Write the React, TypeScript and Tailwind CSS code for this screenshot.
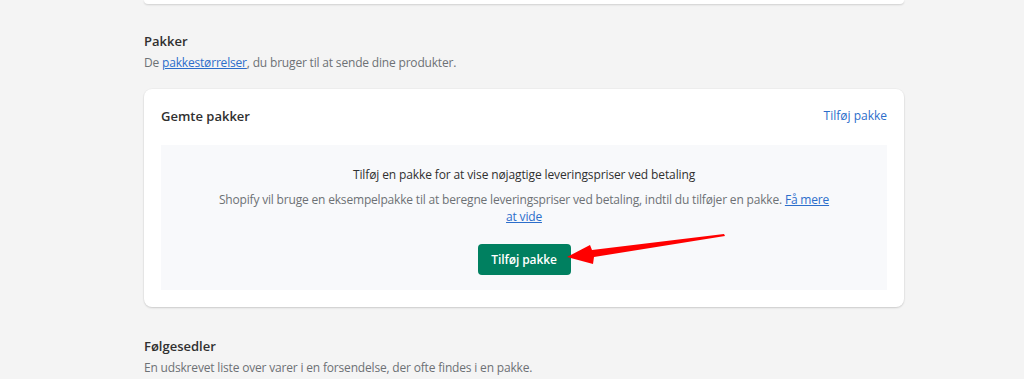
import React from "react";

export default function App() {
  return (
    <div className="relative w-[1024px] h-[379px] overflow-hidden bg-[#f4f4f4] font-['Open_Sans',sans-serif] text-[#202223]">
      <div className="ml-[144px] w-[760px]">
        <div className="h-[4px] rounded-b-lg bg-white shadow-[0_1px_2px_rgba(0,0,0,0.15)]" />
        <div className="pt-[27px]">
          <h2 className="text-[13px] leading-[20px] font-semibold text-[#303030]">Pakker</h2>
          <p className="mt-[3px] text-[12px] leading-[18px] tracking-[-0.18px] text-[#6d7175]">
            De <a className="text-[#2c6ecb] underline">pakkestørrelser</a>, du bruger til at sende dine produkter.
          </p>
        </div>
        <div className="mt-[17px] rounded-lg bg-white px-[17px] pt-[17px] pb-[17px] shadow-[0_1px_2px_rgba(0,0,0,0.15),0_0_0_1px_rgba(0,0,0,0.02)]">
          <div className="flex items-center justify-between h-[20px]">
            <h3 className="text-[13px] leading-[20px] font-semibold text-[#303030]">Gemte pakker</h3>
            <a className="text-[12px] leading-[20px] text-[#2c6ecb]">Tilføj pakke</a>
          </div>
          <div className="mt-[19px] h-[145px] bg-[#f8f9fb] pt-[20px] flex flex-col items-center">
            <p className="text-[12px] leading-[20px] tracking-[-0.12px] text-[#303030]">
              Tilføj en pakke for at vise nøjagtige leveringspriser ved betaling
            </p>
            <p className="mt-[6px] w-[622px] text-center text-[12px] leading-[17px] tracking-[-0.18px] text-[#6d7175]">
              Shopify vil bruge en eksempelpakke til at beregne leveringspriser ved betaling, indtil du tilføjer en pakke.{" "}
              <a className="text-[#2c6ecb] underline">Få mere at vide</a>
            </p>
            <button className="mt-[19px] h-[31px] w-[93px] rounded-[4px] bg-[#008060] text-[12px] font-semibold tracking-[-0.1px] text-white">
              Tilføj pakke
            </button>
          </div>
        </div>
        <div className="pt-[29px]">
          <h2 className="text-[13px] leading-[20px] font-semibold text-[#303030]">Følgesedler</h2>
          <p className="mt-[3px] text-[12px] leading-[18px] tracking-[-0.18px] text-[#6d7175]">
            En udskrevet liste over varer i en forsendelse, der ofte findes i en pakke.
          </p>
        </div>
      </div>
      <svg className="pointer-events-none absolute left-0 top-0" width="1024" height="379" viewBox="0 0 1024 379">
        <polygon points="567,257 590,245 592,250 724,234 725,236 594,257 593,264" fill="#ff0000" />
      </svg>
    </div>
  );
}
